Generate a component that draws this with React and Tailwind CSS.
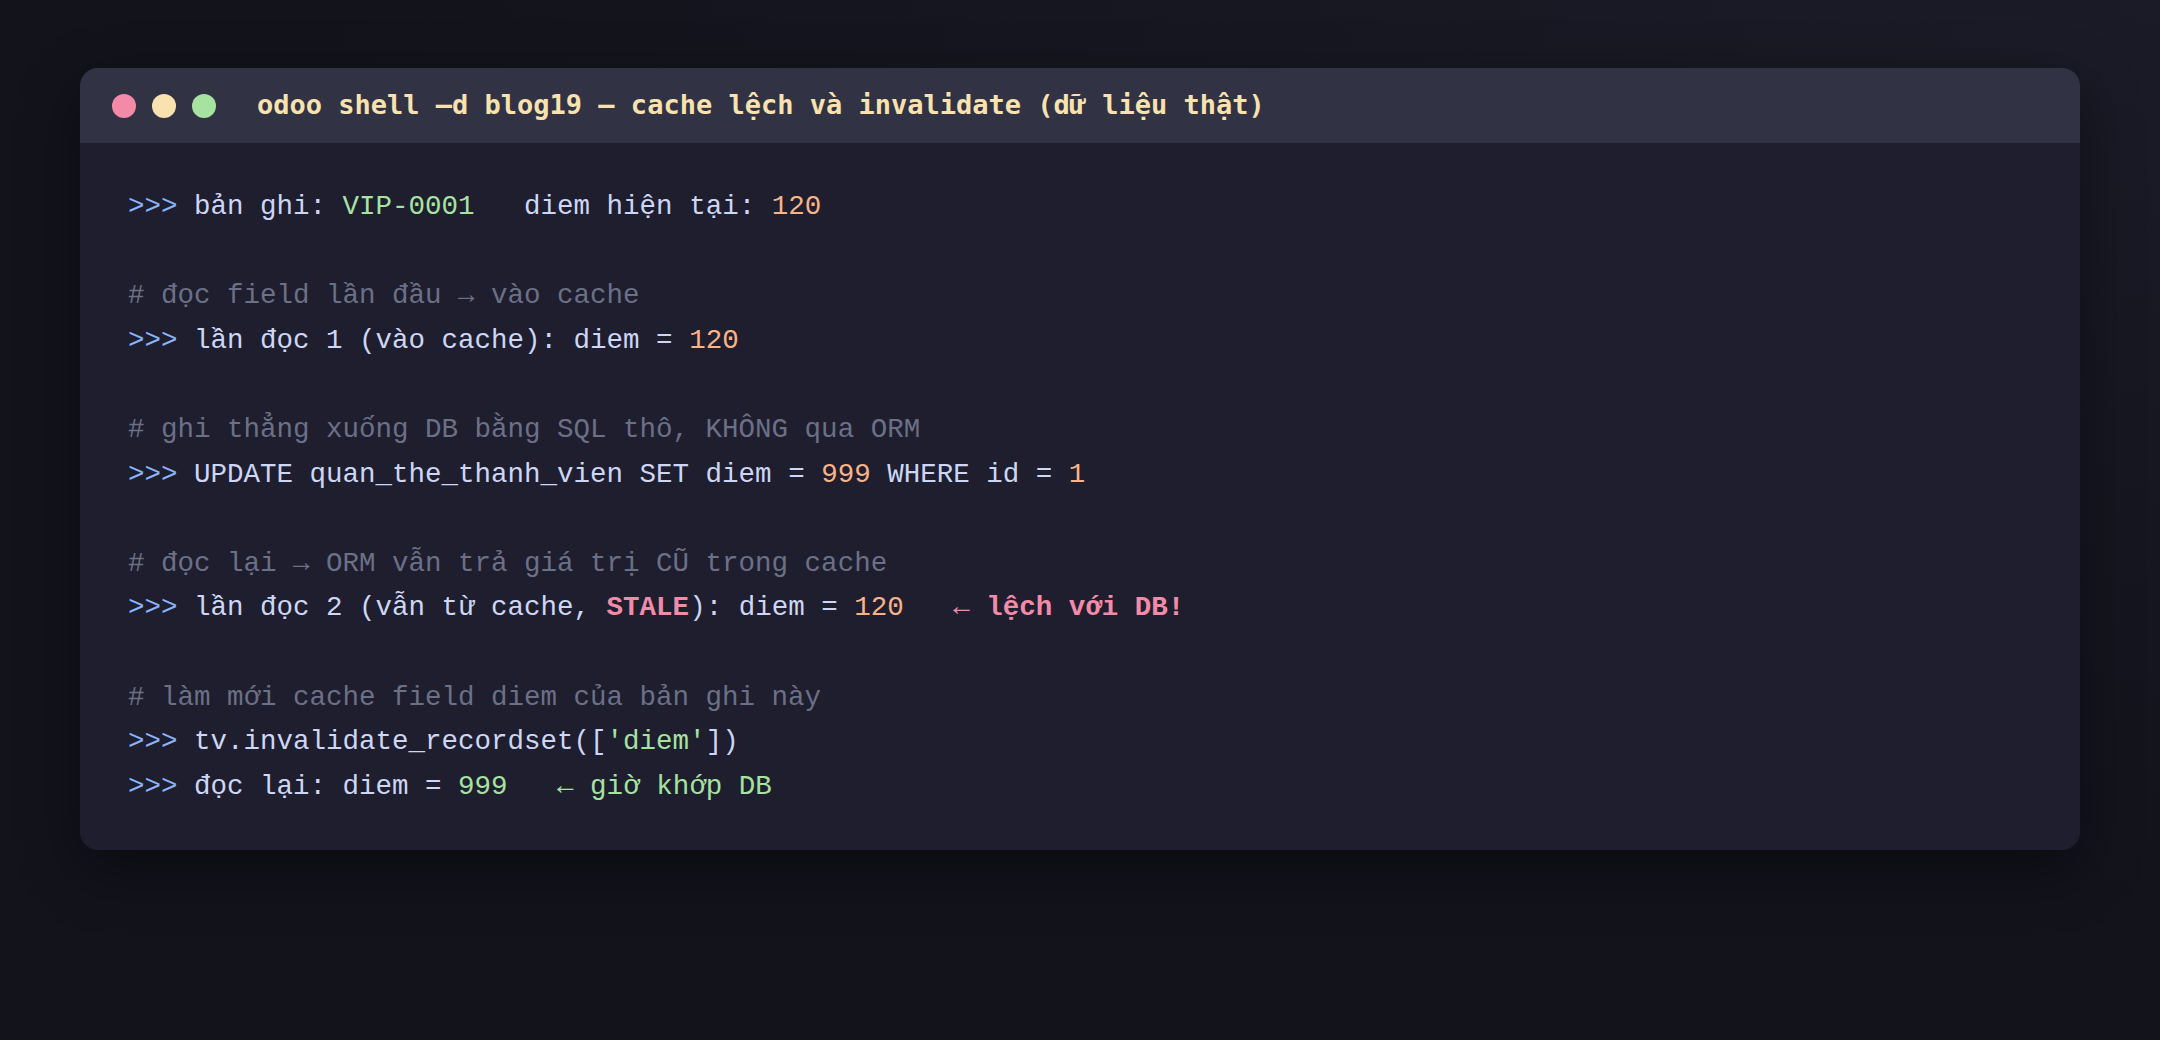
const C = {
  prompt: 'text-[#89b4fa]',
  text: 'text-[#cdd6f4]',
  green: 'text-[#a6e3a1]',
  peach: 'text-[#fab387]',
  red: 'text-[#f38ba8]',
  comment: 'text-[#6c7086]',
};

function Prompt({ children }) {
  return (
    <div className={C.text}>
      <span className={C.prompt}>&gt;&gt;&gt;</span> {children}
    </div>
  );
}

function Comment({ children }) {
  return <div className={C.comment}># {children}</div>;
}

function Blank() {
  return <div>&nbsp;</div>;
}

export default function App() {
  return (
    <div className="min-h-screen w-full bg-[#13131c] bg-[radial-gradient(ellipse_at_top_right,#1b1b28_0%,#13131c_60%)] pt-[68px] px-[80px]">
      <div className="w-full rounded-[18px] overflow-hidden bg-[#1e1e2e] shadow-[0_20px_60px_rgba(0,0,0,0.45)]">
        {/* title bar */}
        <div className="h-[75px] bg-[#313244] flex items-center pl-[32px]">
          <div className="flex gap-[16px]">
            <span className="w-[24px] h-[24px] rounded-full bg-[#f38ba8]" />
            <span className="w-[24px] h-[24px] rounded-full bg-[#f9e2af]" />
            <span className="w-[24px] h-[24px] rounded-full bg-[#a6e3a1]" />
          </div>
          <div className="ml-[41px] text-[27px] font-bold text-[#f9e2af] font-['DejaVu_Sans_Mono',monospace] whitespace-pre">
            odoo shell –d blog19 — cache lệch và invalidate (dữ liệu thật)
          </div>
        </div>

        {/* body */}
        <div className="px-[48px] pt-[42px] pb-[41px] font-['Liberation_Mono',monospace] text-[27.5px] leading-[44.6px] whitespace-pre">
          <Prompt>
            bản ghi: <span className={C.green}>VIP-0001</span>   diem hiện tại: <span className={C.peach}>120</span>
          </Prompt>
          <Blank />
          <Comment>đọc field lần đầu → vào cache</Comment>
          <Prompt>
            lần đọc 1 (vào cache): diem = <span className={C.peach}>120</span>
          </Prompt>
          <Blank />
          <Comment>ghi thẳng xuống DB bằng SQL thô, KHÔNG qua ORM</Comment>
          <Prompt>
            UPDATE quan_the_thanh_vien SET diem = <span className={C.peach}>999</span> WHERE id = <span className={C.peach}>1</span>
          </Prompt>
          <Blank />
          <Comment>đọc lại → ORM vẫn trả giá trị CŨ trong cache</Comment>
          <Prompt>
            lần đọc 2 (vẫn từ cache, <span className={`${C.red} font-bold`}>STALE</span>): diem = <span className={C.peach}>120</span>   <span className={`${C.red} font-bold`}>← lệch với DB!</span>
          </Prompt>
          <Blank />
          <Comment>làm mới cache field diem của bản ghi này</Comment>
          <Prompt>
            tv.invalidate_recordset([<span className={C.green}>'diem'</span>])
          </Prompt>
          <Prompt>
            đọc lại: diem = <span className={C.green}>999</span>   <span className={C.green}>← giờ khớp DB</span>
          </Prompt>
        </div>
      </div>
    </div>
  );
}
